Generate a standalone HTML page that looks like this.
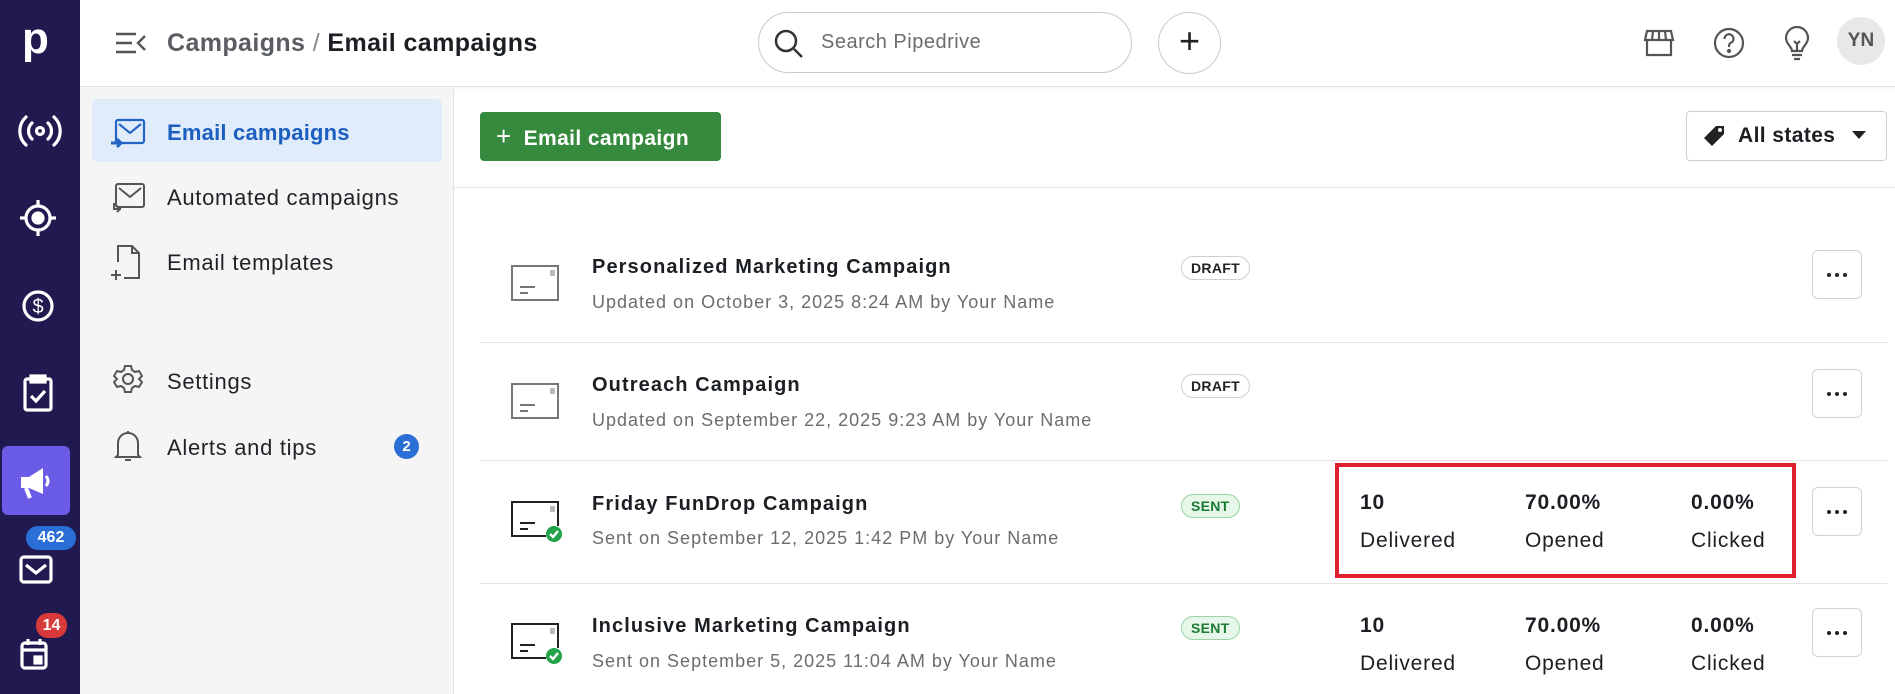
<!DOCTYPE html>
<html><head><meta charset="utf-8"><style>
*{box-sizing:border-box;margin:0;padding:0}
body{width:1895px;height:694px;overflow:hidden;background:#fff;font-family:"Liberation Sans",Arial,sans-serif;color:#1b1f23;position:relative}
.abs{position:absolute}
#nav{left:0;top:0;width:80px;height:694px;background:#201a50}
#hdr{left:80px;top:0;width:1815px;height:87px;border-bottom:1px solid #e2e2e2;background:#fff;box-shadow:0 1px 2px rgba(0,0,0,.06)}
#side{left:80px;top:88px;width:374px;height:606px;background:#f5f5f5;border-right:1px solid #e4e4e4}
.si{position:absolute;left:167px;font-size:22px;letter-spacing:.7px;color:#1f2328}
.t{position:absolute;font-size:20px;letter-spacing:1.1px;font-weight:bold;color:#1b1f23;left:592px}
.s{position:absolute;font-size:18px;letter-spacing:1px;color:#6a6d70;left:592px}
.sep{position:absolute;left:480px;width:1407px;height:1px;background:#e3e3e3}
.badge{position:absolute;left:1181px;height:24px;border-radius:12px;font-size:14px;font-weight:bold;padding:3px 9px;letter-spacing:.3px}
.draft{border:1.5px solid #cfcfcf;color:#222;background:#fff}
.sent{border:1.5px solid #9ad4a3;color:#1d7a33;background:#e6f6e9}
.dots{position:absolute;left:1812px;width:50px;height:49px;border:1px solid #d2d2d2;border-radius:6px;display:flex;align-items:center;justify-content:center;gap:4px}
.dots i{display:block;width:4px;height:4px;border-radius:50%;background:#222}
.st{position:absolute;font-size:21px;letter-spacing:.8px}
.st b{display:block;font-weight:bold;margin-bottom:14px}
</style></head><body>
<div id="nav" class="abs">
 <div class="abs" style="left:22px;top:14px;color:#fff;font-weight:bold;font-size:44px;line-height:50px">p</div>
 <svg class="abs" style="left:15px;top:112px" width="50" height="38" viewBox="0 0 50 38" fill="none" stroke="#fff" stroke-width="3.2" stroke-linecap="round"><circle cx="25" cy="19" r="3.5"/><path d="M17 11a11 11 0 0 0 0 16M33 11a11 11 0 0 1 0 16M11 5a19 19 0 0 0 0 28M39 5a19 19 0 0 1 0 28"/></svg>
 <svg class="abs" style="left:18px;top:198px" width="40" height="40" viewBox="0 0 40 40" fill="none" stroke="#fff" stroke-width="3.2"><circle cx="20" cy="20" r="12"/><circle cx="20" cy="20" r="5" fill="#fff"/><path d="M20 2v6M20 32v6M2 20h6M32 20h6"/></svg>
 <svg class="abs" style="left:18px;top:286px" width="40" height="40" viewBox="0 0 40 40" fill="none" stroke="#fff" stroke-width="3.2"><circle cx="20" cy="20" r="14"/><text x="20" y="27" text-anchor="middle" fill="#fff" stroke="none" font-size="20" font-family="Liberation Sans">$</text></svg>
 <svg class="abs" style="left:20px;top:374px" width="36" height="40" viewBox="0 0 36 40" fill="none" stroke="#fff" stroke-width="3.2"><rect x="5" y="5" width="26" height="31" rx="2"/><rect x="11" y="2" width="14" height="6" fill="#fff"/><path d="M11 22l5 5 9-10"/></svg>
 <div class="abs" style="left:2px;top:446px;width:68px;height:69px;background:#6b5ce7;border-radius:6px"></div>
 <svg class="abs" style="left:16px;top:462px" width="40" height="40" viewBox="0 0 40 40" fill="#fff"><path d="M5 15h8l14-9v26l-14-6H5z"/><path d="M10 26l4 10" stroke="#fff" stroke-width="4"/><path d="M30 14q4 5 0 10" stroke="#fff" stroke-width="3" fill="none"/></svg>
 <svg class="abs" style="left:19px;top:555px" width="34" height="30" viewBox="0 0 34 30" fill="none" stroke="#fff" stroke-width="3.2"><rect x="2" y="2" width="30" height="25" rx="3"/><path d="M7 10l10 8 10-8"/></svg>
 <div class="abs" style="left:26px;top:526px;width:50px;height:24px;border-radius:12px;background:#2b6fd6;color:#fff;font-weight:bold;font-size:16px;text-align:center;line-height:24px">462</div>
 <svg class="abs" style="left:20px;top:637px" width="30" height="34" viewBox="0 0 30 34" fill="none" stroke="#fff" stroke-width="3.2"><rect x="2" y="6" width="24" height="25" rx="3"/><path d="M2 13h24M8 2v6M20 2v6"/><rect x="15" y="20" width="6" height="6" fill="#fff"/></svg>
 <div class="abs" style="left:36px;top:613px;width:31px;height:25px;border-radius:12px;background:#d83a3a;color:#fff;font-weight:bold;font-size:16px;text-align:center;line-height:25px">14</div>
</div>
<div id="hdr" class="abs">
 <svg class="abs" style="left:35px;top:32px" width="32" height="22" viewBox="0 0 32 22" fill="none" stroke="#555" stroke-width="2.4"><path d="M1 2h20M1 11h16M1 20h20M30 4l-7 7 7 7"/></svg>
 <div class="abs" style="left:87px;top:29px;font-size:25px;letter-spacing:.4px;font-weight:bold;color:#5a5d62">Campaigns <span style="font-weight:normal;color:#888">/</span> <span style="color:#1b1f23">Email campaigns</span></div>
 <div class="abs" style="left:678px;top:12px;width:374px;height:61px;border:1.5px solid #c8c8c8;border-radius:31px"></div>
 <svg class="abs" style="left:693px;top:28px" width="32" height="32" viewBox="0 0 32 32" fill="none" stroke="#333" stroke-width="2.5"><circle cx="13" cy="13" r="10"/><path d="M21 21l8 8"/></svg>
 <div class="abs" style="left:741px;top:31px;font-size:20px;letter-spacing:.5px;color:#6a6d70">Search Pipedrive</div>
 <div class="abs" style="left:1078px;top:12px;width:63px;height:62px;border:1.5px solid #c8c8c8;border-radius:50%;text-align:center;font-size:36px;line-height:56px;color:#222">+</div>
 <svg class="abs" style="left:1563px;top:27px" width="32" height="32" viewBox="0 0 32 32" fill="none" stroke="#555" stroke-width="2.2"><path d="M4 4h24l2 9H2z M10 4l-1 9M16 4v9M22 4l1 9"/><path d="M4 13v15h24V13"/></svg>
 <svg class="abs" style="left:1632px;top:26px" width="34" height="34" viewBox="0 0 34 34" fill="none" stroke="#555" stroke-width="2.2"><circle cx="17" cy="17" r="14"/><path d="M12.5 13a4.5 4.5 0 1 1 6 4c-1.5 1-1.5 2-1.5 4"/><circle cx="17" cy="25" r="1" fill="#555"/></svg>
 <svg class="abs" style="left:1703px;top:26px" width="28" height="36" viewBox="0 0 28 36" fill="none" stroke="#555" stroke-width="2.2"><path d="M9 25c0-4-6-7-6-13a11 11 0 0 1 22 0c0 6-6 9-6 13zM9 29h10M11 33h6M11 15l3 3 3-3M14 18v7"/></svg>
 <div class="abs" style="left:1757px;top:17px;width:48px;height:48px;border-radius:50%;background:#e8e8e8;color:#555;font-weight:bold;font-size:19px;text-align:center;line-height:48px">YN</div>
</div>
<div id="side" class="abs"></div>
<div class="abs" style="left:92px;top:99px;width:350px;height:63px;background:#e1ecfb;border-radius:6px"></div>
<svg class="abs" style="left:110px;top:117px" width="36" height="36" viewBox="0 0 36 36" fill="none" stroke="#2364c6" stroke-width="2.2"><rect x="6" y="3" width="28" height="23" rx="2"/><path d="M9 7l11 9 11-9"/><path d="M1 26h9M7 22l4 4-4 4" stroke-width="3"/></svg>
<div class="si" style="top:120px;color:#1d5fbf;font-weight:bold;letter-spacing:.2px">Email campaigns</div>
<svg class="abs" style="left:110px;top:181px" width="36" height="36" viewBox="0 0 36 36" fill="none" stroke="#555" stroke-width="2"><rect x="6" y="3" width="28" height="23" rx="2"/><path d="M9 7l11 9 11-9"/><path d="M4 22v6h7M7 31l3-3-3-3"/></svg>
<div class="si" style="top:185px">Automated campaigns</div>
<svg class="abs" style="left:110px;top:244px" width="32" height="38" viewBox="0 0 32 38" fill="none" stroke="#555" stroke-width="2"><path d="M8 18V2h14l7 7v25H14M22 2v7h7M6 26v10M1 31h10"/></svg>
<div class="si" style="top:250px">Email templates</div>
<svg class="abs" style="left:113px;top:364px" width="30" height="30" viewBox="0 0 30 30" fill="none" stroke="#555" stroke-width="2"><circle cx="15" cy="15" r="5"/><path d="M12 2h6l1 4 3 2 4-1 3 5-3 3 3 3-3 5-4-1-3 2-1 4h-6l-1-4-3-2-4 1-3-5 3-3-3-3 3-5 4 1 3-2z"/></svg>
<div class="si" style="top:369px">Settings</div>
<svg class="abs" style="left:114px;top:429px" width="28" height="34" viewBox="0 0 28 34" fill="none" stroke="#555" stroke-width="2"><path d="M4 26V14a10 10 0 0 1 20 0v12l2 2H2zM14 2v2M11 31h6"/></svg>
<div class="si" style="top:435px">Alerts and tips</div>
<div class="abs" style="left:394px;top:434px;width:25px;height:25px;border-radius:50%;background:#2b6fd6;color:#fff;font-weight:bold;font-size:15px;text-align:center;line-height:25px">2</div>

<div class="abs" style="left:480px;top:112px;width:241px;height:49px;background:#368a3e;border-radius:4px;color:#fff;font-weight:bold;font-size:21px;letter-spacing:.4px;line-height:49px;padding-left:16px"><span style="font-size:26px;font-weight:normal;margin-right:12px">+</span>Email campaign</div>
<div class="abs" style="left:1686px;top:111px;width:201px;height:50px;border:1px solid #cfcfcf;border-radius:4px"></div>
<svg class="abs" style="left:1702px;top:124px" width="24" height="24" viewBox="0 0 24 24"><path d="M14 2h8v8L10 22 2 14z" fill="#222"/><circle cx="18" cy="6" r="2" fill="#fff"/></svg>
<div class="abs" style="left:1738px;top:124px;font-size:21px;letter-spacing:.4px;font-weight:bold">All states</div>
<svg class="abs" style="left:1852px;top:131px" width="14" height="9"><path d="M0 0h14L7 8z" fill="#222"/></svg>
<div class="abs" style="left:454px;top:187px;width:1441px;height:1px;background:#e3e3e3"></div>

<svg class="abs" style="left:510px;top:260px" width="54" height="42" viewBox="0 0 54 42" fill="none" stroke="#777" stroke-width="2"><rect x="2" y="6" width="46" height="34"/><rect x="40" y="10" width="5" height="6" fill="#bbb" stroke="none"/><path d="M10 27h15M10 33h8"/></svg>
<div class="t" style="top:256px">Personalized Marketing Campaign</div>
<div class="s" style="top:292px">Updated on October 3, 2025 8:24 AM by Your Name</div>
<div class="badge draft" style="top:256px">DRAFT</div>
<div class="dots" style="top:250px"><i></i><i></i><i></i></div>
<div class="sep" style="top:342px"></div>

<svg class="abs" style="left:510px;top:378px" width="54" height="42" viewBox="0 0 54 42" fill="none" stroke="#777" stroke-width="2"><rect x="2" y="6" width="46" height="34"/><rect x="40" y="10" width="5" height="6" fill="#bbb" stroke="none"/><path d="M10 27h15M10 33h8"/></svg>
<div class="t" style="top:374px">Outreach Campaign</div>
<div class="s" style="top:410px">Updated on September 22, 2025 9:23 AM by Your Name</div>
<div class="badge draft" style="top:374px">DRAFT</div>
<div class="dots" style="top:369px"><i></i><i></i><i></i></div>
<div class="sep" style="top:460px"></div>

<svg class="abs" style="left:510px;top:496px" width="56" height="48" viewBox="0 0 56 48" fill="none" stroke="#222" stroke-width="2"><path d="M36 40H2V6h46v24"/><rect x="40" y="10" width="5" height="6" fill="#bbb" stroke="none"/><path d="M10 27h15M10 33h8"/><circle cx="44" cy="38" r="8" fill="#22a34a" stroke="none"/><path d="M40 38l3 3 5-6" stroke="#fff" stroke-width="2.4"/></svg>
<div class="t" style="top:493px">Friday FunDrop Campaign</div>
<div class="s" style="top:528px">Sent on September 12, 2025 1:42 PM by Your Name</div>
<div class="badge sent" style="top:494px">SENT</div>
<div class="st" style="left:1360px;top:491px"><b>10</b>Delivered</div>
<div class="st" style="left:1525px;top:491px"><b>70.00%</b>Opened</div>
<div class="st" style="left:1691px;top:491px"><b>0.00%</b>Clicked</div>
<div class="abs" style="left:1335px;top:463px;width:461px;height:115px;border:4px solid #e0202e"></div>
<div class="dots" style="top:487px"><i></i><i></i><i></i></div>
<div class="sep" style="top:583px"></div>

<svg class="abs" style="left:510px;top:618px" width="56" height="48" viewBox="0 0 56 48" fill="none" stroke="#222" stroke-width="2"><path d="M36 40H2V6h46v24"/><rect x="40" y="10" width="5" height="6" fill="#bbb" stroke="none"/><path d="M10 27h15M10 33h8"/><circle cx="44" cy="38" r="8" fill="#22a34a" stroke="none"/><path d="M40 38l3 3 5-6" stroke="#fff" stroke-width="2.4"/></svg>
<div class="t" style="top:615px">Inclusive Marketing Campaign</div>
<div class="s" style="top:651px">Sent on September 5, 2025 11:04 AM by Your Name</div>
<div class="badge sent" style="top:616px">SENT</div>
<div class="st" style="left:1360px;top:614px"><b>10</b>Delivered</div>
<div class="st" style="left:1525px;top:614px"><b>70.00%</b>Opened</div>
<div class="st" style="left:1691px;top:614px"><b>0.00%</b>Clicked</div>
<div class="dots" style="top:608px"><i></i><i></i><i></i></div>
</body></html>
